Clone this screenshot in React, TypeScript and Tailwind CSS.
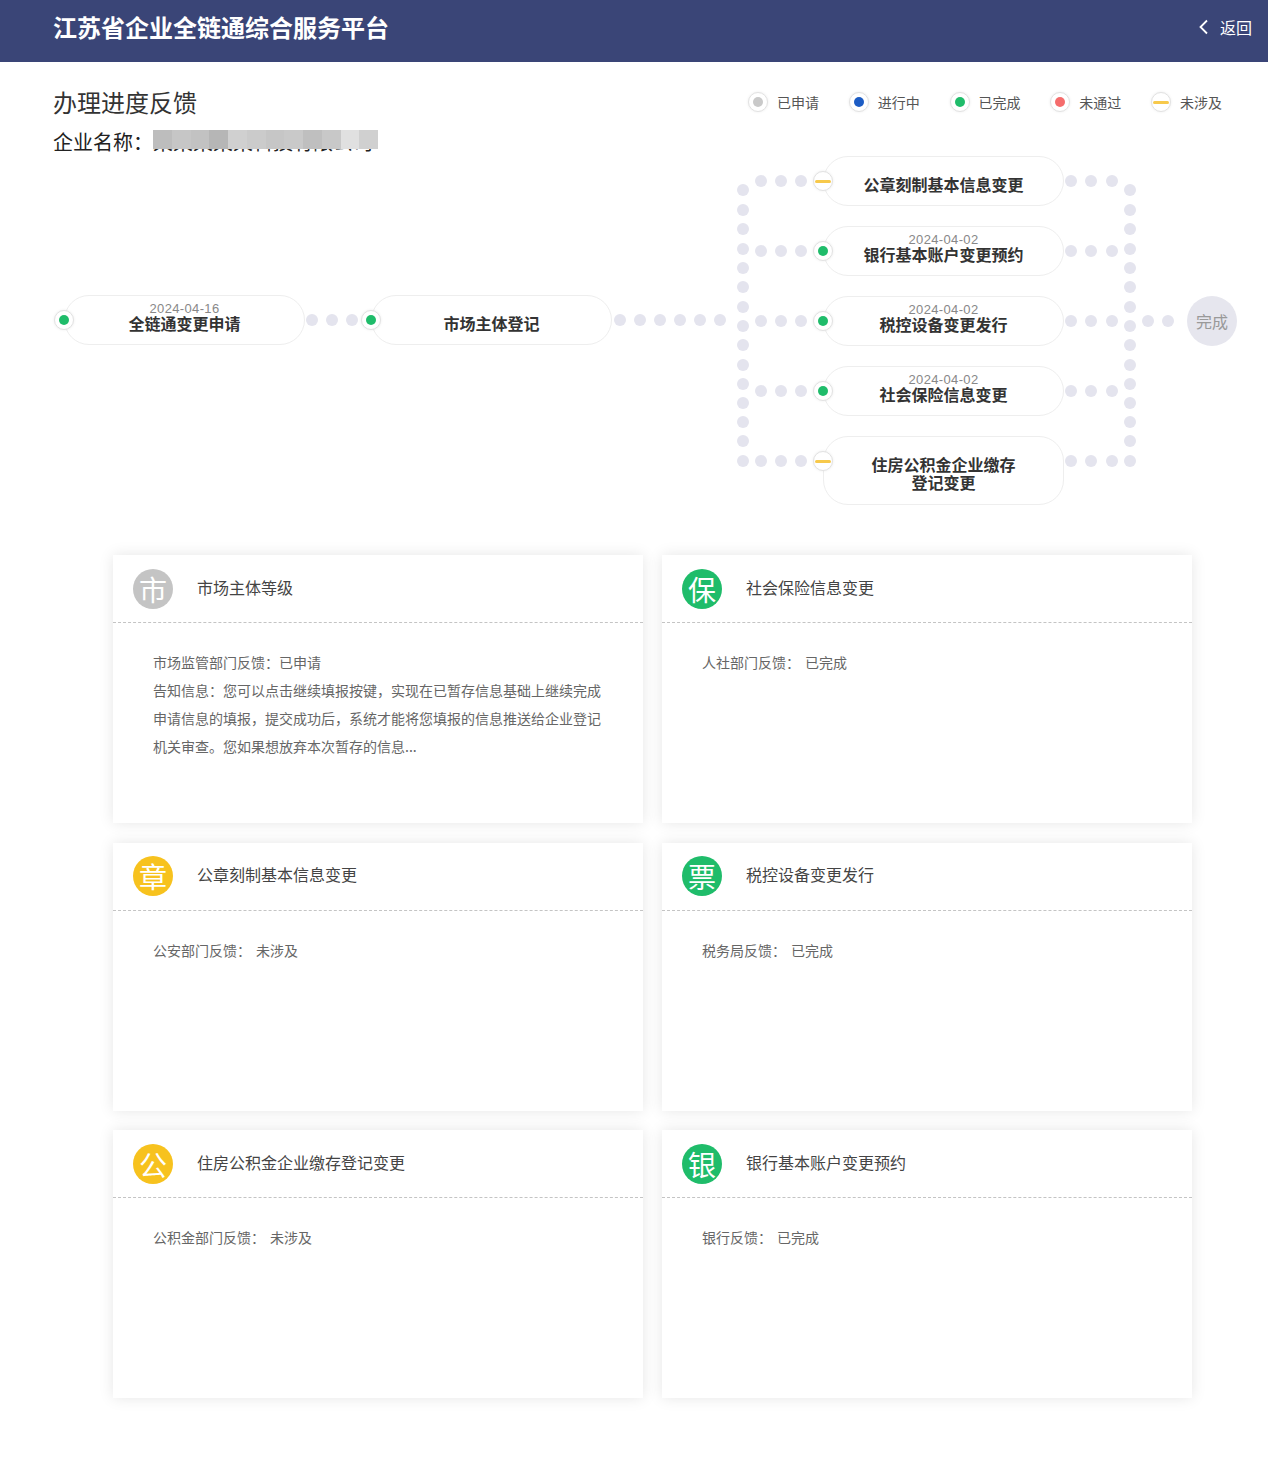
const legend = [
  { label: '已申请', status: 'applied' },
  { label: '进行中', status: 'doing' },
  { label: '已完成', status: 'done' },
  { label: '未通过', status: 'failed' },
  { label: '未涉及', status: 'none' },
]

const branches = [
  { title: ['公章刻制基本信息变更'], status: 'none' },
  { date: '2024-04-02', title: ['银行基本账户变更预约'], status: 'done' },
  { date: '2024-04-02', title: ['税控设备变更发行'], status: 'done' },
  { date: '2024-04-02', title: ['社会保险信息变更'], status: 'done' },
  { title: ['住房公积金企业缴存', '登记变更'], status: 'none', tall: true },
]

const columnY = [34, 54, 73, 93, 112, 131, 151, 170, 189, 209, 228, 247, 266, 285, 305]

// centre points of the connector dots, relative to the diagram
const connectorDots = [
  ...[312, 332, 352].map((x) => [x, 164]),
  ...[620, 640, 660, 680, 700, 720].map((x) => [x, 164]),
  ...columnY.map((y) => [743, y]),
  ...columnY.map((y) => [1130, y]),
  ...[25, 95, 165, 235, 305].flatMap((y) => [
    [761, y],
    [781, y],
    [801, y],
    [1071, y],
    [1091, y],
    [1112, y],
  ]),
  [1148, 165],
  [1168, 165],
]

const mosaic = ['#bdbdbd', '#c6c6c6', '#c2c2c2', '#b6b6b6', '#d0d0d0', '#cbcbcb', '#c6c6c6', '#c9c9c9', '#bfbfbf', '#c8c8c8', '#e0e0e0', '#d0d0d0']

const cards = [
  { char: '市', color: 'bg-[#c4c4c4]', title: '市场主体等级', lines: [{ label: '市场监管部门反馈：', value: '已申请', tight: true }, { label: '告知信息：您可以点击继续填报按键，实现在已暂存信息基础上继续完成' }, { label: '申请信息的填报，提交成功后，系统才能将您填报的信息推送给企业登记' }, { label: '机关审查。您如果想放弃本次暂存的信息...' }] },
  { char: '保', color: 'bg-[#1fbc6a]', title: '社会保险信息变更', lines: [{ label: '人社部门反馈：', value: '已完成' }] },
  { char: '章', color: 'bg-[#f7c21e]', title: '公章刻制基本信息变更', lines: [{ label: '公安部门反馈：', value: '未涉及' }] },
  { char: '票', color: 'bg-[#1fbc6a]', title: '税控设备变更发行', lines: [{ label: '税务局反馈：', value: '已完成' }] },
  { char: '公', color: 'bg-[#f7c21e]', title: '住房公积金企业缴存登记变更', lines: [{ label: '公积金部门反馈：', value: '未涉及' }] },
  { char: '银', color: 'bg-[#1fbc6a]', title: '银行基本账户变更预约', lines: [{ label: '银行反馈：', value: '已完成' }] },
]

const StatusIcon = ({ status }: { status: string }) => (
  <div className="flex h-5 w-5 items-center justify-center rounded-full border border-[#e2e2e2] bg-white shadow-[0_0_3px_rgba(0,0,0,0.08)]">
    {status === 'applied' && <div className="h-2.5 w-2.5 rounded-full bg-[#c9c9c9]" />}
    {status === 'doing' && <div className="h-2.5 w-2.5 rounded-full bg-[#1c5cc4]" />}
    {status === 'done' && <div className="h-2.5 w-2.5 rounded-full bg-[#1fbc6a]" />}
    {status === 'failed' && <div className="h-2.5 w-2.5 rounded-full bg-[#f56c6c]" />}
    {status === 'none' && <div className="h-[3px] w-4 rounded-full bg-[#f7c94b]" />}
  </div>
)

const Pill = ({ date, title, status, tall }: { date?: string; title: string[]; status: string; tall?: boolean }) => (
  <div className={`relative w-full rounded-[25px] border border-[#eeeeee] bg-white text-center ${tall ? 'h-[69px]' : 'h-[50px]'} ${date ? 'pt-[6px]' : 'pt-[18px]'}`}>
    {date && <div className="-mb-0.5 font-['Liberation_Sans',sans-serif] text-[13px] leading-[14px] tracking-[0.35px] text-[#888888]">{date}</div>}
    {title.map((line) => (
      <div key={line} className="text-base leading-[18px] font-bold text-[#333333]">{line}</div>
    ))}
    <div className="absolute top-[14px] -left-[11px]"><StatusIcon status={status} /></div>
  </div>
)

const Card = ({ card }: { card: (typeof cards)[number] }) => (
  <div className="h-[268px] bg-white shadow-[0_0_14px_rgba(0,0,0,0.1)]">
    <div className="flex h-[68px] items-center border-b border-dashed border-[#c4c4c4] pl-5">
      <div className={`flex h-10 w-10 items-center justify-center rounded-full text-[28px] leading-none text-white ${card.color}`}>{card.char}</div>
      <div className="mb-1 ml-6 text-base text-[#444444]">{card.title}</div>
    </div>
    <div className="px-10 pt-[25px] text-sm leading-7 text-[#666666]">
      {card.lines.map((line) => (
        <div key={line.label} className="whitespace-nowrap">
          <span>{line.label}</span>
          {line.value && <span className={line.tight ? '' : 'ml-[5px]'}>{line.value}</span>}
        </div>
      ))}
    </div>
  </div>
)

export default function App() {
  return (
    <div className="min-h-[1462px] bg-white font-['Noto_Sans_CJK_SC',sans-serif]">
      {/* Header */}
      <header className="flex h-[62px] items-center justify-between bg-[#3a4577] pr-4 pb-2 pl-[53px]">
        <div className="text-2xl font-bold text-white">江苏省企业全链通综合服务平台</div>
        <div className="flex items-center gap-[9px] text-base text-white">
          <svg width="14" height="18" viewBox="0 0 14 18" fill="none" stroke="currentColor" strokeWidth="1.8">
            <polyline points="10,2.5 3.5,9 10,15.5" />
          </svg>
          <span>返回</span>
        </div>
      </header>

      {/* Title and legend */}
      <div className="flex justify-between pt-6 pr-[46px] pl-[53px]">
        <div>
          <div className="text-2xl leading-8 text-[#333333]">办理进度反馈</div>
          <div className="mt-2.5 flex h-7 items-center text-xl leading-7 text-[#222222]">
            <span>企业名称：</span>
            <div className="relative h-7 w-[225px] whitespace-nowrap">
              <span className="block text-[20px] leading-7">某某某某某科技有限公司</span>
              <div className="absolute top-[2px] left-0 flex h-[19px] w-[225px]">
                {mosaic.map((c, i) => (
                  <div key={i} className="flex-1" style={{ backgroundColor: c }} />
                ))}
              </div>
            </div>
          </div>
        </div>
        <div className="flex h-8 gap-[29.75px]">
          {legend.map((item) => (
            <div key={item.label} className="flex items-center gap-[9px] text-sm text-[#555555]">
              <StatusIcon status={item.status} />
              <span>{item.label}</span>
            </div>
          ))}
        </div>
      </div>

      {/* Flow diagram */}
      <div className="relative h-[399px]">
        {connectorDots.map(([x, y], i) => (
          <div key={i} className="absolute h-3 w-3 rounded-full bg-[#e4e4ee]" style={{ left: x - 6, top: y - 6 }} />
        ))}

        <div className="absolute top-[139px] left-[64px] w-[241px]">
          <Pill date="2024-04-16" title={['全链通变更申请']} status="done" />
        </div>
        <div className="absolute top-[139px] left-[371px] w-[241px]">
          <Pill title={['市场主体登记']} status="done" />
        </div>

        <div className="absolute top-0 left-[823px] flex w-[241px] flex-col gap-5">
          {branches.map((b) => (
            <Pill key={b.title[0]} date={b.date} title={b.title} status={b.status} tall={b.tall} />
          ))}
        </div>

        <div className="absolute top-[140px] left-[1187px] flex h-[50px] w-[50px] items-center justify-center rounded-full bg-[#e6e6ee] text-base text-[#999999]">完成</div>
      </div>

      {/* Feedback cards */}
      <div className="ml-[113px] grid w-[1079px] grid-cols-[530px_530px] gap-x-[19px] gap-y-[19.5px]">
        {cards.map((card) => (
          <Card key={card.title} card={card} />
        ))}
      </div>
    </div>
  )
}
